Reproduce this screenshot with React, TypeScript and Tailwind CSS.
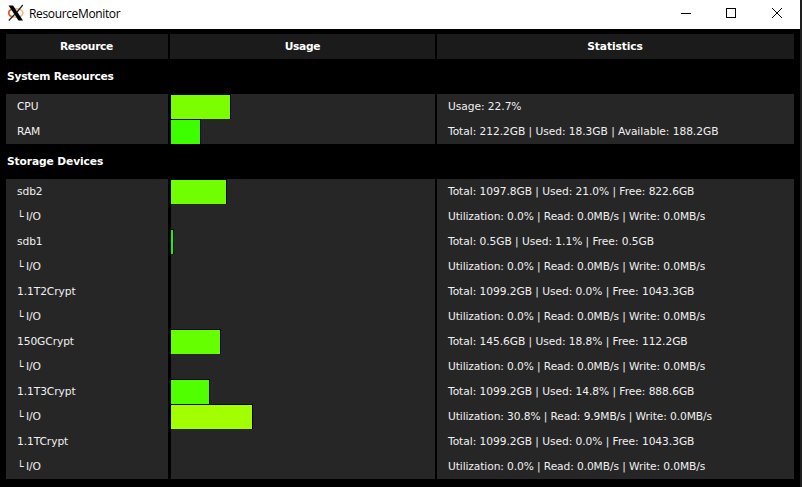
type Row = { name: string; child?: boolean; bar?: string; stats: string };

const idle = 'Utilization: 0.0% | Read: 0.0MB/s | Write: 0.0MB/s';

const systemRows: Row[] = [
  { name: 'CPU', bar: 'w-[60px] bg-[#7bff00]', stats: 'Usage: 22.7%' },
  { name: 'RAM', bar: 'w-[30px] bg-[#3cff00]', stats: 'Total: 212.2GB | Used: 18.3GB | Available: 188.2GB' },
];

const storageRows: Row[] = [
  { name: 'sdb2', bar: 'w-[56px] bg-[#70ff00]', stats: 'Total: 1097.8GB | Used: 21.0% | Free: 822.6GB' },
  { name: 'I/O', child: true, stats: idle },
  { name: 'sdb1', bar: 'w-[3px] bg-[#05ff00]', stats: 'Total: 0.5GB | Used: 1.1% | Free: 0.5GB' },
  { name: 'I/O', child: true, stats: idle },
  { name: '1.1T2Crypt', stats: 'Total: 1099.2GB | Used: 0.0% | Free: 1043.3GB' },
  { name: 'I/O', child: true, stats: idle },
  { name: '150GCrypt', bar: 'w-[50px] bg-[#66ff00]', stats: 'Total: 145.6GB | Used: 18.8% | Free: 112.2GB' },
  { name: 'I/O', child: true, stats: idle },
  { name: '1.1T3Crypt', bar: 'w-[39px] bg-[#50ff00]', stats: 'Total: 1099.2GB | Used: 14.8% | Free: 888.6GB' },
  { name: 'I/O', child: true, bar: 'w-[82px] bg-[#a2ff00]', stats: 'Utilization: 30.8% | Read: 9.9MB/s | Write: 0.0MB/s' },
  { name: '1.1TCrypt', stats: 'Total: 1099.2GB | Used: 0.0% | Free: 1043.3GB' },
  { name: 'I/O', child: true, stats: idle },
];

function Table({ rows }: { rows: Row[] }) {
  return (
    <div>
      {rows.map((row, i) => (
        <div key={i} className="grid h-[25px] grid-cols-[162px_264px_356px] gap-x-[3px] leading-[25px]">
          <div className="flex bg-[#262626] pl-[11px] tracking-[-0.08px]">
            {row.child && <span className="w-[9px]">└</span>}
            <span>{row.name}</span>
          </div>
          <div className="bg-[#262626]">
            {row.bar && <div className={`h-[25px] border-t border-r border-black ${row.bar}`} />}
          </div>
          <div className={`-ml-px bg-[#262626] pl-[11px] ${row.child ? 'tracking-[-0.1px]' : 'tracking-[-0.05px]'}`}>{row.stats}</div>
        </div>
      ))}
    </div>
  );
}

function XLogo() {
  return (
    <svg width="18" height="18" viewBox="0 0 18 18" fill="none">
      <ellipse cx="9" cy="9" rx="7" ry="4.3" stroke="#f3b583" strokeWidth="1.5" />
      <path d="M4 5.5C0.5 7.5 1 11 4.5 12.7" stroke="#d9532f" strokeWidth="1.5" />
      <path d="M1.5 1.5H6L16 16.5H11.5Z" fill="#000" />
      <path d="M15.8 1L10 8M8 10L1.8 16.5" stroke="#222" strokeWidth="1.2" />
    </svg>
  );
}

export default function App() {
  return (
    <div className="flex h-[487px] w-[802px] overflow-hidden bg-[#1e1e1e]">
      <div className="flex w-[800px] flex-col bg-black">
        <header className="flex h-[29px] items-center bg-white pl-[7px] text-black">
          <div className="-mt-[3px]"><XLogo /></div>
          <span className="ml-[4px] -mt-[2px] whitespace-nowrap font-['Open_Sans',sans-serif] text-[12px] tracking-[-0.36px]">ResourceMonitor</span>
          <svg className="ml-auto mb-[2px]" width="120" height="27" viewBox="0 0 120 27" fill="none" stroke="#000" shapeRendering="crispEdges">
            <path d="M1 13.5H11" />
            <rect x="46.5" y="8.5" width="9" height="9" />
            <path d="M92 8L102 18M102 8L92 18" shapeRendering="auto" />
          </svg>
        </header>
        <main className="whitespace-nowrap pt-[5px] pl-[6px] font-['DejaVu_Sans',sans-serif] text-[10.67px] text-[#f0f0f0]">
          <div className="grid h-[25px] grid-cols-[162px_265px_357px] gap-x-[2px] text-center font-bold leading-[25px] text-white">
            <div className="bg-[#1b1b1b] pr-px tracking-[-0.3px]">Resource</div>
            <div className="bg-[#1b1b1b] tracking-[-0.3px]">Usage</div>
            <div className="bg-[#1b1b1b] pr-px tracking-[-0.1px]">Statistics</div>
          </div>
          <h2 className="h-[35px] pl-px font-bold leading-[35px] tracking-[-0.2px] text-white">System Resources</h2>
          <Table rows={systemRows} />
          <h2 className="h-[35px] pl-px font-bold leading-[35px] tracking-[-0.1px] text-white">Storage Devices</h2>
          <Table rows={storageRows} />
        </main>
      </div>
    </div>
  );
}
